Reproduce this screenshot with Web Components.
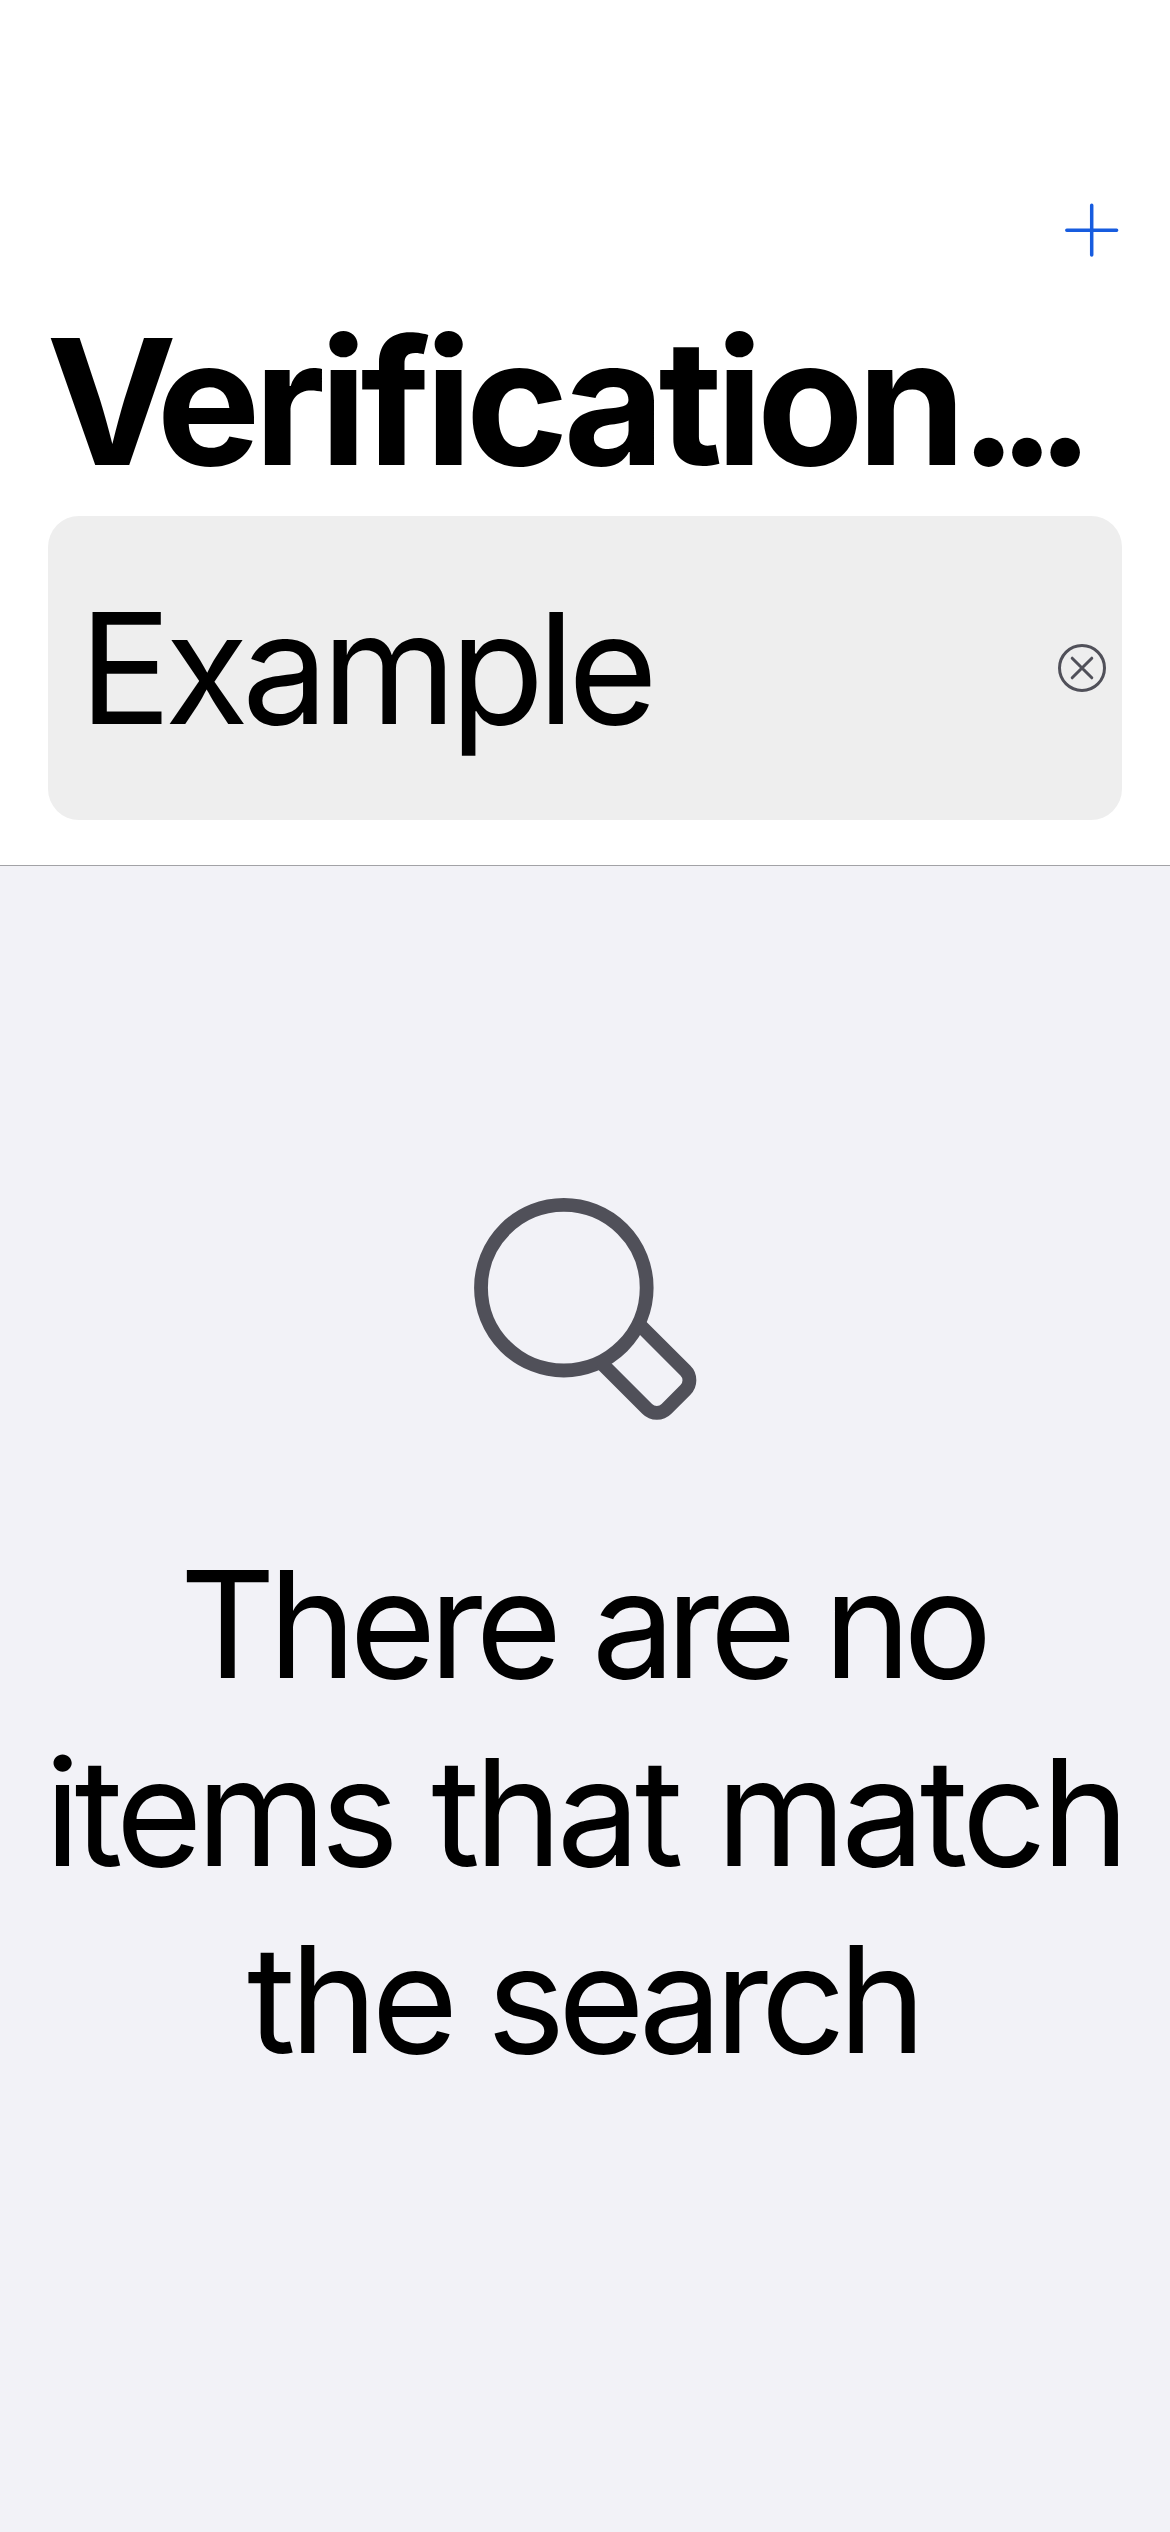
<!DOCTYPE html>
<html lang="en">
<head>
<meta charset="utf-8">
<title>Verification</title>
<style>
html, body { margin: 0; height: 100%; }
body { font-family: Inter, "Liberation Sans", sans-serif; color: #000; background: #f2f2f7; }
</style>
</head>
<body>
<app-screen>
  <nav-header slot="header">
    <add-button slot="action"></add-button>
    <large-title slot="title"><tracked-word track="-20.5">V</tracked-word>erification</large-title>
    <search-field slot="search">Example</search-field>
  </nav-header>
  <empty-state>
    <search-icon slot="icon"></search-icon>
    <text-line style="--end:6px;--ws:-5.2px"><tracked-word track="-7.1">There</tracked-word> <tracked-word track="-9.5">are</tracked-word> <tracked-word track="-8.1">no</tracked-word></text-line>
    <text-line style="--end:1px;--ws:-3.6px"><tracked-word track="-6.05">items</tracked-word> <tracked-word track="-5.5">that</tracked-word> <tracked-word track="-5.1">match</tracked-word></text-line>
    <text-line style="--end:4px;--ws:-7.2px"><tracked-word track="-6.05">the</tracked-word> <tracked-word track="-7.4">search</tracked-word></text-line>
  </empty-state>
</app-screen>
<script>
const define = (name, html, ready) => customElements.define(name, class extends HTMLElement {
  constructor() {
    super();
    this.attachShadow({ mode: 'open' }).innerHTML = html;
  }
  connectedCallback() { if (ready) ready(this); }
});

define('app-screen', `
<style>
:host { display: flex; flex-direction: column; width: 1170px; height: 2532px; overflow: hidden; }
</style>
<slot name="header"></slot><slot></slot>`);

define('nav-header', `
<style>
:host { display: flex; flex-direction: column; box-sizing: border-box; height: 866px; padding: 186px 48px 0; background: #fff; border-bottom: 1px solid #a2a2a6; }
.bar { display: flex; justify-content: flex-end; height: 88px; }
.title { height: 242px; }
</style>
<div class="bar"><slot name="action"></slot></div>
<div class="title"><slot name="title"></slot></div>
<slot name="search"></slot>`);

define('add-button', `
<style>
:host { display: block; width: 60px; height: 88px; }
svg { display: block; }
</style>
<svg width="60" height="88" viewBox="0 0 60 88" fill="none" stroke="#175cdf" stroke-width="3.5" stroke-linecap="round"><path d="M4.8 44.3H54.6M29.7 19.2V69"/></svg>`);

define('large-title', `
<style>
:host { display: block; padding-top: 21.5px; margin-left: -1.5px; font-size: 174.7px; font-weight: 700; line-height: 211.4px; letter-spacing: -6.57px; white-space: nowrap; }
.dots { letter-spacing: -20px; }
</style>
<slot></slot><span class="dots">...</span>`);

define('search-field', `
<style>
:host { display: flex; align-items: center; justify-content: space-between; box-sizing: border-box; height: 304px; padding: 0 16px 0 31px; border-radius: 31px; background: #eee; font-size: 154px; letter-spacing: -6.77px; }
svg { display: block; flex: none; }
</style>
<span><slot></slot></span>
<svg width="48" height="48" viewBox="0 0 48 48" fill="none" stroke="#505059" stroke-width="3" stroke-linecap="round"><circle cx="24" cy="24" r="22.5"/><path d="M14.2 14.2L33.8 33.8M33.8 14.2L14.2 33.8"/></svg>`);

define('empty-state', `
<style>
:host { display: flex; flex-direction: column; align-items: center; flex: 1; padding-top: 304px; background: #f2f2f7; }
.message { display: flex; flex-direction: column; align-items: center; margin-top: 91px; font-size: 148.7px; line-height: 187.5px; }
</style>
<slot name="icon"></slot>
<div class="message"><slot></slot></div>`);

define('text-line', `
<style>
:host { display: block; padding-right: var(--end, 0); word-spacing: var(--ws, 0); white-space: nowrap; }
</style>
<slot></slot>`);

define('tracked-word', `
<style>
:host { display: inline; }
</style>
<slot></slot>`, el => { el.style.letterSpacing = el.getAttribute('track') + 'px'; });

define('search-icon', `
<style>
:host { display: block; width: 270px; height: 270px; }
svg { display: block; }
</style>
<svg width="270" height="270" viewBox="0 0 810 810" fill="none" stroke="#505059" stroke-width="41.5"><circle cx="341.5" cy="353" r="248.5"/><path d="M566 461.5L706 601.5A41 41 0 0 1 706 660L649.5 716.5A41 41 0 0 1 591.5 716.5L452 577"/></svg>`);
</script>
</body>
</html>
